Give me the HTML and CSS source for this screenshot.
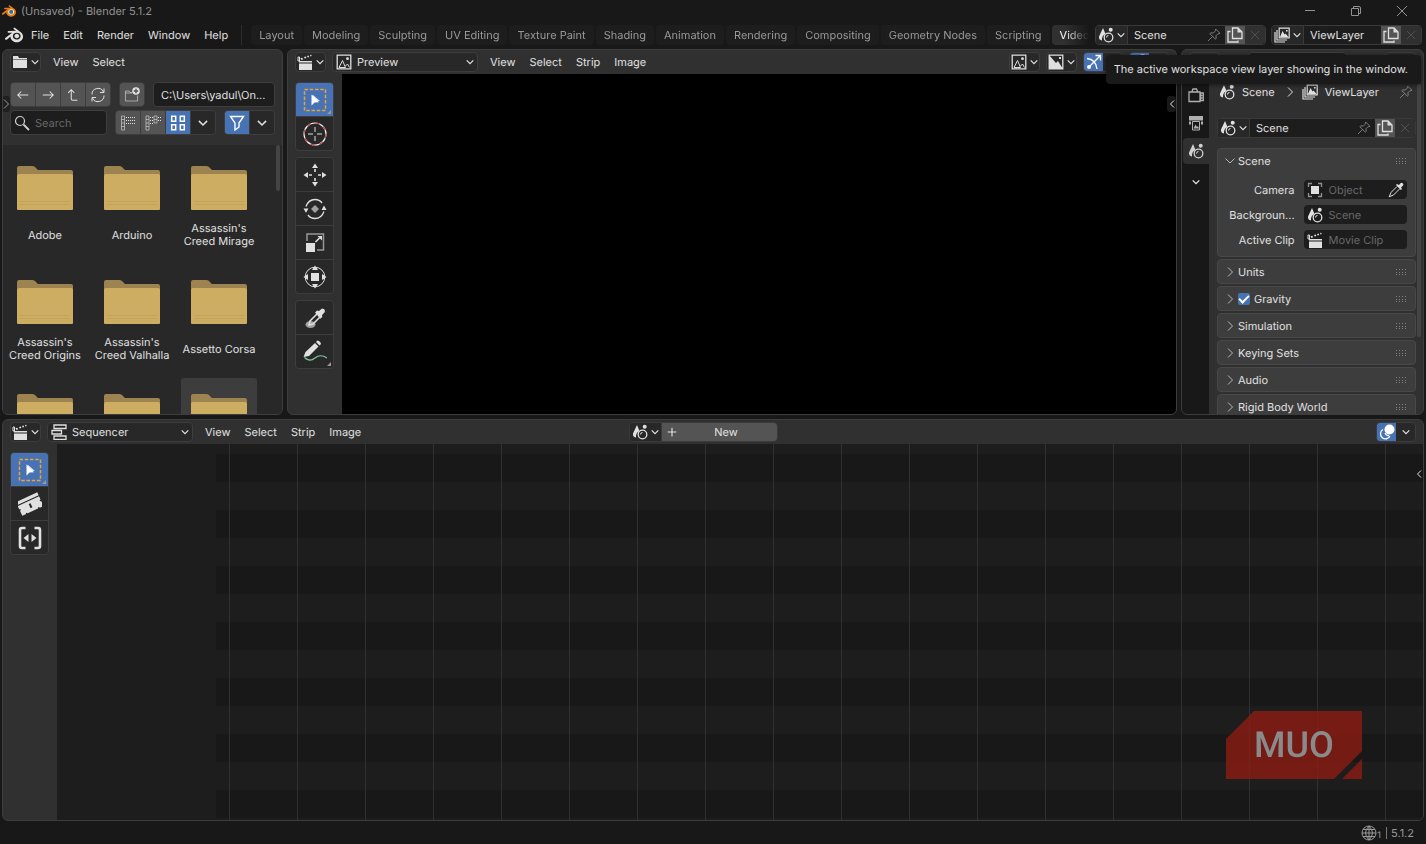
FILE: index.html
```html
<!DOCTYPE html>
<html lang="en">
<head>
<meta charset="utf-8">
<title>(Unsaved) - Blender 5.1.2</title>
<link rel="stylesheet" href="styles.css">
</head>
<body>
<svg class="defs" aria-hidden="true">
  <symbol id="blender" viewBox="0 0 24 24"><path d="M12.51 13.214c.046-.8.438-1.506 1.03-2.006a3.424 3.424 0 0 1 2.212-.79c.85 0 1.631.3 2.211.79.592.5.983 1.206 1.028 2.005.045.823-.285 1.586-.865 2.153a3.389 3.389 0 0 1-2.374.938 3.393 3.393 0 0 1-2.376-.938c-.58-.567-.91-1.33-.865-2.152M7.35 14.831c.006.314.106.922.256 1.398a7.372 7.372 0 0 0 1.593 2.757 8.227 8.227 0 0 0 2.787 2.001 8.947 8.947 0 0 0 3.66.76 8.964 8.964 0 0 0 3.657-.772 8.285 8.285 0 0 0 2.785-2.01 7.428 7.428 0 0 0 1.592-2.762 6.964 6.964 0 0 0 .25-3.074 7.123 7.123 0 0 0-1.016-2.779 7.764 7.764 0 0 0-1.852-2.043h.002L13.566 2.55l-.02-.015c-.492-.378-1.319-.376-1.86.002-.547.382-.609 1.015-.123 1.415l-.001.001 3.126 2.543-9.53.01h-.013c-.788.001-1.545.518-1.695 1.172-.154.665.38 1.217 1.2 1.22V8.9l4.83-.01-8.62 6.617-.034.025c-.813.622-1.075 1.658-.563 2.313.52.667 1.625.668 2.447.004L7.414 14s-.069.52-.063.831zm12.09 1.741c-.97.988-2.326 1.548-3.795 1.55-1.47.004-2.827-.552-3.797-1.538a4.51 4.51 0 0 1-1.036-1.622 4.282 4.282 0 0 1 .282-3.519 4.702 4.702 0 0 1 1.153-1.371c.942-.768 2.141-1.183 3.396-1.185 1.256-.002 2.455.41 3.398 1.175.48.391.87.854 1.152 1.367a4.28 4.28 0 0 1 .522 1.706 4.236 4.236 0 0 1-.239 1.811 4.54 4.54 0 0 1-1.035 1.626"/></symbol>
  <symbol id="chev" viewBox="0 0 8 8"><path class="ln" stroke-width="1.200" d="M.700 2.300l3.300 3.300 3.300-3.300"/></symbol>
  <symbol id="chev-r" viewBox="0 0 8 12"><path class="ln" d="M2 1.500l4.500 4.500-4.500 4.500"/></symbol>
  <symbol id="chev-l" viewBox="0 0 8 12"><path class="ln" d="M6 2.500l-3.500 3.500 3.500 3.500"/></symbol>
  <symbol id="chev-d" viewBox="0 0 12 8"><path class="ln" d="M1.500 1.500l4.500 4.500 4.500-4.500"/></symbol>
  <symbol id="folder-w" viewBox="0 0 16 16"><path d="M1 2h5l1 2h8v1H1zM1 5.600h14V14H1z"/></symbol>
  <symbol id="arrow-l" viewBox="0 0 16 16"><path class="ln" stroke-width="1.200" d="M14 8H2M6 4L2 8l4 4"/></symbol>
  <symbol id="arrow-r" viewBox="0 0 16 16"><path class="ln" stroke-width="1.200" d="M2 8h12M10 4l4 4-4 4"/></symbol>
  <symbol id="arrow-up" viewBox="0 0 16 16"><path class="ln" stroke-width="1.200" d="M6 2v10q0 2 2 2h5M2.500 5.500L6 2l3.500 3.500"/></symbol>
  <symbol id="refresh" viewBox="0 0 16 16"><path class="ln" d="M2 7.500A6 6 0 0 1 13.500 5M14 1.500V5.500h-4M14 8.500A6 6 0 0 1 2.500 11M2 14.500v-4h4"/></symbol>
  <symbol id="newfolder" viewBox="0 0 16 16"><path class="ln dim" d="M8 5.500H6L5 4H1.500v10h12V8.500M1.500 6H8"/><circle cx="12" cy="4" r="3.800"/><path d="M12 1.800v4.400M9.800 4h4.400" stroke="#545454" stroke-width="1.400"/></symbol>
  <symbol id="search" viewBox="0 0 16 16"><circle class="ln" stroke-width="1.200" cx="6" cy="6" r="4.500"/><path class="ln" d="M9.500 9.500L15 15" stroke-width="1.800"/></symbol>
  <symbol id="list1" viewBox="0 0 16 16"><path class="ln dim" d="M1.500 1h3v14h-3zM1.500 4.500h3M1.500 8h3M1.500 11.500h3"/><path class="ln" stroke-dasharray="1 1" d="M6 2.500H16M6 5.500H16M6 8.500H16"/></symbol>
  <symbol id="list2" viewBox="0 0 16 16"><path class="ln dim" d="M1 1h3v14H1zM1 4.500h3M1 8h3M1 11.500h3M9 1h3v7H9zM9 4.500h3"/><path class="ln" stroke-dasharray="1 1" d="M5 2.500H8M5 5.500H8M13 2.500H16M13 5.500H16M5 8.500H8"/></symbol>
  <symbol id="thumbs" viewBox="0 0 16 16"><path class="ln" stroke-width="1.500" d="M1.700 1.200h4v5h-4zM10.300 1.200h4v5h-4zM1.700 9.700h4v5h-4zM10.300 9.700h4v5h-4z"/></symbol>
  <symbol id="funnel" viewBox="0 0 16 16"><path class="ln" stroke-width="1.400" d="M1.500 1.500h13L10 8v4l-4 3V8z"/></symbol>
  <symbol id="clap" viewBox="0 0 16 16"><path d="M2 9.500h13V16H2zM2 7h13v1.600H2z"/><path class="ln" d="M1 3h1.500v4H1z"/><path d="M3.500 4.300l1.700-.6 1 1.600-1.700.6zM7 3l1.700-.6.700 1.500-1.700.6zM10 2l1.500-.4.700 1.400-1.500.5zM13 1l1.200-.2.500 1.300-1.200.3z"/></symbol>
  <symbol id="image" viewBox="0 0 16 16"><path class="ln" stroke-width="1.300" d="M1.200 1.200h13.600v13.600H1.200z"/><path class="ln" d="M3 13.500l3.500-7 3 7zM9.500 12l2-2 2 3.500"/><circle cx="11.500" cy="4.700" r="1.400"/></symbol>
  <symbol id="alpha" viewBox="0 0 16 16"><path class="ln" stroke-width="1.300" d="M1.200 1.200h13.600v13.600H1.200z"/><path d="M1 1l7 8 2-2 5 8H1zM11 3h2v2h-2z"/></symbol>
  <symbol id="gizmo" viewBox="0 0 16 16"><path class="ln" stroke-width="1.300" d="M1 4.500Q10 5.500 11 15M3 13L14 2M9.500 1.500h5v5"/><circle cx="3" cy="13" r="2"/></symbol>
  <symbol id="overlay" viewBox="0 0 16 16"><circle cx="10.500" cy="5.500" r="5"/><path class="ln" stroke-width="1.300" d="M4 5.500A5 5 0 1 0 11 12M6 9q1 2.500 4 2.700"/></symbol>
  <symbol id="scene" viewBox="0 0 16 16"><path d="M5 1L1 9.500Q.500 13 4 13.500 3.500 8.500 7.500 7z"/><circle cx="12.700" cy="2.800" r="2"/><circle class="ln" stroke-width="1.300" cx="10.500" cy="10.500" r="4.300"/><path class="ln" d="M8.500 10.500a2 2 0 0 1 2-2"/></symbol>
  <symbol id="layers" viewBox="0 0 16 16"><path class="ln" stroke-width="1.200" d="M5.200 1.200h10v9.600h-10zM3 3v10h10M1 5v10h10"/><path d="M6 10l2.500-6 2 3.500 1-1 3 3.500zM12 3h1.600v1.600H12z"/></symbol>
  <symbol id="dup" viewBox="0 0 16 16"><path class="ln" stroke-width="1.300" d="M5.500 1h5.500l4 4v6.500H5.500zM3.500 4.500H1V15h10v-1.500"/><path d="M10.500 1l4.500 4.500h-4.500z"/></symbol>
  <symbol id="pin" viewBox="0 0 16 16"><path class="ln" d="M10 1.200l4.800 4.800-1.300.7-.8-.3-2.500 2.500.3 3-1 .8L3.300 6.500l.9-1 3 .3 2.500-2.500-.3-.9zM6.300 9.700L1.200 14.800"/></symbol>
  <symbol id="x" viewBox="0 0 16 16"><path class="ln" d="M3.500 3.500l9 9M12.500 3.500l-9 9"/></symbol>
  <symbol id="plus" viewBox="0 0 16 16"><path class="ln" stroke-width="1.300" d="M8 3v10M3 8h10"/></symbol>
  <symbol id="seq" viewBox="0 0 16 16"><path class="ln" stroke-width="1.300" d="M3 1h12v3.500H3zM1 6.500h9.500V10H1zM3 12h12v3.300H3z"/></symbol>
  <symbol id="tool" viewBox="0 0 16 16"><path class="ln" stroke-width="1.300" d="M1 5h11v9.500H1zM12.500 6h2.800v7.500h-2.800zM4 4.500L5 2h3.500l1 2.500M12.500 8.500h2M12.500 11h2"/></symbol>
  <symbol id="printer" viewBox="0 0 16 16"><path d="M1 1h14v4.500H1zM1 6.500h2v3H1zM13 6.500h2v3h-2z"/><path class="ln" d="M4.500 6.500h7v8.500h-7z"/><path d="M5.500 13.500l2-4 1.500 2.500 1-1 1 2.500z"/></symbol>
  <symbol id="object" viewBox="0 0 16 16"><path d="M4 4h8v8H4z"/><path class="ln dim" stroke-width="1.300" d="M1.500 5V1.500H5M11 1.500h3.500V5M14.500 11v3.500H11M5 14.500H1.500V11"/></symbol>
  <symbol id="dropper" viewBox="0 0 16 16"><path class="ln" d="M9 4.500L3 10.500 1.200 14.800 5.500 13l6-6"/><path d="M8 3l1-1 2 1 2-2.200q2.800.3 2.300 2.500L13 5.500l1 1.500-1.200 1z"/></symbol>
  <symbol id="grip" viewBox="0 0 12 8"><path d="M1 1h1v1H1zM4 1h1v1H4zM7 1h1v1H7zM10 1h1v1h-1zM1 4h1v1H1zM4 4h1v1H4zM7 4h1v1H7zM10 4h1v1h-1zM1 6h1v1H1zM4 6h1v1H4zM7 6h1v1H7zM10 6h1v1h-1z"/></symbol>
  <symbol id="globe" viewBox="0 0 16 16"><circle class="ln" cx="8" cy="8" r="7"/><path class="ln" d="M8 1v14M1 8h14M2 4.500h12M2 11.500h12M8 1Q1 8 8 15M8 1q7 7 0 14"/></symbol>
  <symbol id="t-select" viewBox="0 0 24 24"><path d="M1.500 1.500h21v21h-21z" fill="none" stroke="#e8a33d" stroke-width="1.500" stroke-dasharray="3.500 1.750"/><path d="M8.500 6.500v11l3-3 4.500-.3z"/><path d="M9.500 6.500l7.500 6.500h-4.500l-3 3z" opacity=".8"/></symbol>
  <symbol id="t-cursor" viewBox="0 0 24 24"><circle cx="12" cy="12" r="11" fill="none" stroke="#eee" stroke-width="1.200"/><circle cx="12" cy="12" r="11" fill="none" stroke="#b84a4a" stroke-width="1.200" stroke-dasharray="4.320 4.320"/><path class="ln" d="M12 5v5M12 14v5M5 12h5M14 12h5"/></symbol>
  <symbol id="t-move" viewBox="0 0 24 24"><path d="M12 .5l3 4.500H9zM12 23.500l3-4.500H9zM.5 12L5 9v6zM23.500 12L19 9v6z"/><path class="ln" stroke-width="1.600" d="M12 6v3M12 15v3M6 12h3M15 12h3"/></symbol>
  <symbol id="t-rotate" viewBox="0 0 24 24"><path class="ln" stroke-width="1.300" d="M3 9.500Q5.500 2.500 12 2.500q4.500 0 7 3.500M21 14.500q-2.500 7-9 7-4.500 0-7-3.500"/><path d="M.5 11.500h5L3 15.800zM18.500 13h5L21 8.500z"/><path class="fade" d="M12 8l4 4-4 4-4-4z"/></symbol>
  <symbol id="t-scale" viewBox="0 0 24 24"><path class="ln dim" stroke-width="1.500" d="M4 10V3h16.500v16H14"/><path d="M3 12h9v9H3zM19 5v4.500L14.500 5z"/><path class="ln" stroke-width="1.600" d="M12.500 11l4-4"/></symbol>
  <symbol id="t-transform" viewBox="0 0 24 24"><circle class="ln" cx="12" cy="12" r="9.800"/><path d="M8 8h8v8H8z"/><path d="M12 .5l3 4.500H9zM12 23.500l3-4.500H9zM.5 12L5 9v6zM23.500 12L19 9v6z"/></symbol>
  <symbol id="t-dropper" viewBox="0 0 24 24"><ellipse class="fade" cx="7.500" cy="18.500" rx="5" ry="3.500"/><path class="ln" stroke-width="1.500" d="M14 8L7 15l-1 4 4-1 7-7"/><path d="M12 6.500l2-2 2 .5 3-2.500q4 .5 2.500 4L19 9l.3 2-2 1.700z"/></symbol>
  <symbol id="t-pen" viewBox="0 0 24 24"><path d="M.5 17l2-5L12 3l3.500 3.500-9.500 9.500zM13 2l1.500-1.500q3 .5 3.500 3.500L16.500 5.500z"/><path fill="none" stroke="#7ccca0" stroke-width="1.200" d="M1.500 17.500q5 5 10.500.5t12 0"/></symbol>
  <symbol id="t-blade" viewBox="0 0 24 24"><g transform="rotate(-25 12 12)"><path d="M0 4.500h23.500v3.200H0zM0 8.700h23.500v3.500l-1.500.8 1.500 1.500v5h-4l-1-1.300-1.200 1.300H6l-1.200-1.300-1 1.300H0v-5l1.500-1.500L0 12.200z"/><path fill="#282828" d="M10.800 11.500h2v4.500h-2z"/></g></symbol>
  <symbol id="t-slip" viewBox="0 0 24 24"><path class="ln" stroke-width="2.600" d="M7.500 2H4Q2 2 2 4v16q0 2 2 2h3.500M16.500 2H20q2 0 2 2v16q0 2-2 2h-3.500"/><path d="M10.500 8v8l-5-4zM13.500 8v8l5-4z"/></symbol>
  <symbol id="folder" viewBox="0 0 56 44"><path fill="#9c8350" d="M0 43V2q0-2 2-2h13q2 0 3 1l3 3h33q2 0 2 2v37z"/><path fill="#ccad62" d="M0 10q0-2 2-2h52q2 0 2 2v33q0 1-1 1H1q-1 0-1-1z"/><path stroke="#c1a35c" d="M3 35.500h50M3 38.500h50"/></symbol>
</svg>

<div class="app">
  <header class="titlebar">
    <svg class="i14 orange" viewBox="0 0 24 24"><circle cx="15.700" cy="13.500" r="5.500" fill="#eee"/><use href="#blender"/><circle cx="15.700" cy="13.500" r="3.300" fill="#2a6cb0"/></svg>
    <span class="apptitle">(Unsaved) - Blender 5.1.2</span>
    <div class="winctl">
      <button aria-label="Minimize"><svg class="i12" viewBox="0 0 12 12"><path class="ln" d="M1 5.500h10"/></svg></button>
      <button aria-label="Restore"><svg class="i12" viewBox="0 0 12 12"><path class="ln" d="M1.500 3.500h7v7h-7zM3.500 3.500v-2H9q1.500 0 1.500 1.500v5.500h-2"/></svg></button>
      <button aria-label="Close"><svg class="i12" viewBox="0 0 12 12"><path class="ln" d="M1 1l10 10M11 1L1 11"/></svg></button>
    </div>
  </header>

  <div class="topbar">
    <button class="logo" aria-label="Blender"><svg class="i18"><use href="#blender"/></svg></button>
    <nav class="menus">
      <button>File</button><button>Edit</button><button>Render</button><button>Window</button><button>Help</button>
    </nav>
    <nav class="tabs">
      <button>Layout</button><button>Modeling</button><button>Sculpting</button><button>UV Editing</button><button>Texture Paint</button><button>Shading</button><button>Animation</button><button>Rendering</button><button>Compositing</button><button>Geometry Nodes</button><button>Scripting</button><button class="on">Video</button>
    </nav>
    <div class="idbox id-scene">
      <button class="pick" aria-label="Browse scene"><svg class="i16"><use href="#scene"/></svg><svg class="i8"><use href="#chev"/></svg></button>
      <input value="Scene" aria-label="Scene name">
      <svg class="i14 pin"><use href="#pin"/></svg>
      <button class="dup" aria-label="New scene"><svg class="i16"><use href="#dup"/></svg></button>
      <button class="del" aria-label="Delete scene"><svg class="i14"><use href="#x"/></svg></button>
    </div>
    <div class="idbox id-layer">
      <button class="pick" aria-label="Browse view layer"><svg class="i16"><use href="#layers"/></svg><svg class="i8"><use href="#chev"/></svg></button>
      <input value="ViewLayer" aria-label="View layer name">
      <button class="dup" aria-label="New view layer"><svg class="i16"><use href="#dup"/></svg></button>
      <button class="del" aria-label="Delete view layer"><svg class="i14"><use href="#x"/></svg></button>
    </div>
  </div>

  <main class="areas">
    <section class="area files">
      <div class="head">
        <button class="pick boxed" aria-label="Editor type"><svg class="i16"><use href="#folder-w"/></svg><svg class="i8"><use href="#chev"/></svg></button>
        <nav class="menus"><button>View</button><button>Select</button></nav>
      </div>
      <div class="filebar">
        <div class="frow">
          <div class="group">
            <button aria-label="Back"><svg class="i14"><use href="#arrow-l"/></svg></button>
            <button aria-label="Forward"><svg class="i14"><use href="#arrow-r"/></svg></button>
            <button aria-label="Parent folder"><svg class="i14"><use href="#arrow-up"/></svg></button>
            <button aria-label="Refresh"><svg class="i16"><use href="#refresh"/></svg></button>
          </div>
          <div class="group"><button aria-label="New folder"><svg class="i16"><use href="#newfolder"/></svg></button></div>
          <input class="path" value="C:\Users\yadul\On..." aria-label="Path">
        </div>
        <div class="frow">
          <label class="search"><svg class="i16"><use href="#search"/></svg><input placeholder="Search" aria-label="Search"></label>
          <div class="group">
            <button aria-label="Vertical list"><svg class="i16"><use href="#list1"/></svg></button>
            <button aria-label="Horizontal list"><svg class="i16"><use href="#list2"/></svg></button>
            <button class="on" aria-label="Thumbnails"><svg class="i16"><use href="#thumbs"/></svg></button>
            <button class="dark" aria-label="Display settings"><svg class="i10"><use href="#chev"/></svg></button>
          </div>
          <div class="group">
            <button class="on" aria-label="Filter"><svg class="i16"><use href="#funnel"/></svg></button>
            <button class="dark" aria-label="Filter settings"><svg class="i10"><use href="#chev"/></svg></button>
          </div>
        </div>
      </div>
      <button class="edge edge-l" aria-label="Show sidebar"><svg><use href="#chev-r"/></svg></button>
      <div class="filelist">
        <div class="file"><svg><use href="#folder"/></svg><span>Adobe</span></div>
        <div class="file"><svg><use href="#folder"/></svg><span>Arduino</span></div>
        <div class="file"><svg><use href="#folder"/></svg><span>Assassin's Creed Mirage</span></div>
        <div class="file"><svg><use href="#folder"/></svg><span>Assassin's Creed Origins</span></div>
        <div class="file"><svg><use href="#folder"/></svg><span>Assassin's Creed Valhalla</span></div>
        <div class="file"><svg><use href="#folder"/></svg><span>Assetto Corsa</span></div>
        <div class="file"><svg><use href="#folder"/></svg></div>
        <div class="file"><svg><use href="#folder"/></svg></div>
        <div class="file hover"><svg><use href="#folder"/></svg></div>
        <i class="scroll"></i>
      </div>
    </section>

    <section class="area preview">
      <div class="head">
        <button class="pick boxed" aria-label="Editor type"><svg class="i16"><use href="#clap"/></svg><svg class="i8"><use href="#chev"/></svg></button>
        <label class="drop"><svg class="i16"><use href="#image"/></svg><select aria-label="View type"><option>Preview</option></select><svg class="i8"><use href="#chev"/></svg></label>
        <nav class="menus"><button>View</button><button>Select</button><button>Strip</button><button>Image</button></nav>
        <div class="right">
          <button class="pick boxed" aria-label="Display mode"><svg class="i16"><use href="#image"/></svg><svg class="i8"><use href="#chev"/></svg></button>
          <button class="pick boxed" aria-label="Channels"><svg class="i16"><use href="#alpha"/></svg><svg class="i8"><use href="#chev"/></svg></button>
          <div class="toggle"><button class="on" aria-label="Gizmos"><svg class="i16"><use href="#gizmo"/></svg></button><button aria-label="Gizmo settings"><svg class="i8"><use href="#chev"/></svg></button></div>
          <div class="toggle"><button class="on" aria-label="Overlays"><svg class="i16"><use href="#overlay"/></svg></button><button aria-label="Overlay settings"><svg class="i8"><use href="#chev"/></svg></button></div>
        </div>
      </div>
      <div class="work">
        <aside class="tools">
          <div class="tgroup">
            <button class="on more" aria-label="Select box"><svg><use href="#t-select"/></svg></button>
            <button aria-label="Cursor"><svg><use href="#t-cursor"/></svg></button>
          </div>
          <div class="tgroup">
            <button aria-label="Move"><svg><use href="#t-move"/></svg></button>
            <button aria-label="Rotate"><svg><use href="#t-rotate"/></svg></button>
            <button aria-label="Scale"><svg><use href="#t-scale"/></svg></button>
            <button aria-label="Transform"><svg><use href="#t-transform"/></svg></button>
          </div>
          <div class="tgroup">
            <button aria-label="Sample"><svg><use href="#t-dropper"/></svg></button>
            <button class="more" aria-label="Annotate"><svg><use href="#t-pen"/></svg></button>
          </div>
        </aside>
        <div class="screen"><button class="edge edge-r" aria-label="Show sidebar"><svg><use href="#chev-l"/></svg></button></div>
      </div>
    </section>

    <section class="area props">
      <div class="head">
        <button class="pick boxed" aria-label="Editor type"></button>
        <input class="psearch" aria-label="Search properties">
        <button class="pick boxed" aria-label="Options"></button>
      </div>
      <div class="pbody">
        <nav class="ptabs">
          <button aria-label="Render"><svg class="i16"><use href="#tool"/></svg></button>
          <button aria-label="Output"><svg class="i16"><use href="#printer"/></svg></button>
          <button class="on" aria-label="Scene"><svg class="i16"><use href="#scene"/></svg></button>
          <button aria-label="More tabs"><svg class="i8"><use href="#chev"/></svg></button>
        </nav>
        <div class="pcontent">
          <div class="crumbs">
            <svg class="i16"><use href="#scene"/></svg><span>Scene</span>
            <svg class="sep"><use href="#chev-r"/></svg>
            <svg class="i16"><use href="#layers"/></svg><span>ViewLayer</span>
            <svg class="i14 pin"><use href="#pin"/></svg>
          </div>
          <div class="idbox">
            <button class="pick" aria-label="Browse scene"><svg class="i16"><use href="#scene"/></svg><svg class="i8"><use href="#chev"/></svg></button>
            <input value="Scene" aria-label="Scene data name">
            <svg class="i14 pin"><use href="#pin"/></svg>
            <button class="dup" aria-label="New scene"><svg class="i16"><use href="#dup"/></svg></button>
            <button class="del" aria-label="Delete scene"><svg class="i14"><use href="#x"/></svg></button>
          </div>
          <div class="panels">
            <div class="panel open">
              <h3><svg class="pd"><use href="#chev-d"/></svg>Scene<svg class="grip"><use href="#grip"/></svg></h3>
              <div class="field"><label for="cam">Camera</label><div class="slot"><svg class="i16"><use href="#object"/></svg><input id="cam" placeholder="Object"><svg class="i16"><use href="#dropper"/></svg></div></div>
              <div class="field"><label for="bg">Backgroun...</label><div class="slot"><svg class="i16"><use href="#scene"/></svg><input id="bg" placeholder="Scene"></div></div>
              <div class="field"><label for="clip">Active Clip</label><div class="slot"><svg class="i16"><use href="#clap"/></svg><input id="clip" placeholder="Movie Clip"></div></div>
            </div>
            <div class="panel"><h3><svg class="pr"><use href="#chev-r"/></svg>Units<svg class="grip"><use href="#grip"/></svg></h3></div>
            <div class="panel"><h3><svg class="pr"><use href="#chev-r"/></svg><label class="check"><input type="checkbox" checked>Gravity</label><svg class="grip"><use href="#grip"/></svg></h3></div>
            <div class="panel"><h3><svg class="pr"><use href="#chev-r"/></svg>Simulation<svg class="grip"><use href="#grip"/></svg></h3></div>
            <div class="panel"><h3><svg class="pr"><use href="#chev-r"/></svg>Keying Sets<svg class="grip"><use href="#grip"/></svg></h3></div>
            <div class="panel"><h3><svg class="pr"><use href="#chev-r"/></svg>Audio<svg class="grip"><use href="#grip"/></svg></h3></div>
            <div class="panel"><h3><svg class="pr"><use href="#chev-r"/></svg>Rigid Body World<svg class="grip"><use href="#grip"/></svg></h3></div>
          </div>
        </div>
        <i class="scroll"></i>
      </div>
    </section>
  </main>

  <section class="area sequencer">
    <div class="head">
      <div class="left">
        <button class="pick boxed" aria-label="Editor type"><svg class="i16"><use href="#clap"/></svg><svg class="i8"><use href="#chev"/></svg></button>
        <label class="drop"><svg class="i16"><use href="#seq"/></svg><select aria-label="View type"><option>Sequencer</option></select><svg class="i8"><use href="#chev"/></svg></label>
        <nav class="menus"><button>View</button><button>Select</button><button>Strip</button><button>Image</button></nav>
      </div>
      <div class="idbox newbox">
        <button class="pick" aria-label="Browse scene"><svg class="i16"><use href="#scene"/></svg><svg class="i8"><use href="#chev"/></svg></button>
        <button class="new"><svg class="i14"><use href="#plus"/></svg><span>New</span></button>
      </div>
      <div class="right">
        <div class="toggle"><button class="on" aria-label="Overlays"><svg class="i16"><use href="#overlay"/></svg></button><button aria-label="Overlay settings"><svg class="i8"><use href="#chev"/></svg></button></div>
      </div>
    </div>
    <div class="work">
      <aside class="tools">
        <div class="tgroup">
          <button class="on more" aria-label="Select box"><svg><use href="#t-select"/></svg></button>
          <button aria-label="Blade"><svg><use href="#t-blade"/></svg></button>
          <button aria-label="Slip"><svg><use href="#t-slip"/></svg></button>
        </div>
      </aside>
      <div class="timeline"><div class="tracks"></div><div class="frames"></div><button class="edge edge-r" aria-label="Show sidebar"><svg><use href="#chev-l"/></svg></button></div>
    </div>
    <div class="mark">
      <svg viewBox="0 0 136 68"><path fill="#8f1c14" d="M28 0h108v40l-28 28H0V28zM136 48v20h-20z"/></svg>
      <span>MUO</span>
    </div>
  </section>

  <footer class="status"><svg class="i16"><use href="#globe"/></svg><sub>1</sub><span class="bar"></span><span>5.1.2</span></footer>
  <div class="tooltip" role="tooltip">The active workspace view layer showing in the window.</div>
</div>
</body>
</html>
```
FILE: styles.css
```css
* { box-sizing: border-box; }
body {
  margin: 0;
  background: #181818;
  color: #e0e0e0;
  font: 11px/14px Inter, "Noto Sans", sans-serif;
  text-rendering: geometricPrecision;
}
button, input, select {
  font: inherit;
  color: inherit;
  text-rendering: inherit;
  background: none;
  border: 0;
  padding: 0;
  margin: 0;
  min-width: 0;
  outline: 0;
}
input::placeholder { color: #686868; opacity: 1; }
select { appearance: none; }
svg { fill: currentColor; flex: none; display: block; }
.defs { position: absolute; width: 0; height: 0; }
.ln { fill: none; stroke: currentColor; }
.dim { opacity: .6; }
.fade { opacity: .65; }
.i8 { width: 8px; height: 8px; }
.i10 { width: 10px; height: 10px; }
.i12 { width: 12px; height: 12px; }
.i14 { width: 14px; height: 14px; }
.i16 { width: 16px; height: 16px; }
.i18 { width: 18px; height: 18px; }

.app {
  position: relative;
  height: 100vh;
  display: grid;
  grid-template-columns: minmax(0, 1fr);
  grid-template-rows: 22px 27px minmax(0, 366fr) minmax(0, 406fr) 19px;
  padding-bottom: 4px;
  overflow: hidden;
}
.titlebar { display: flex; align-items: center; gap: 5px; padding: 0 18px 0 2px; color: #929292; }
.orange { color: #e87d0d; }
.winctl { margin-left: auto; display: flex; gap: 34px; }

.topbar { display: flex; align-items: center; padding: 0 4px 1px 5px; }
.logo { margin-right: 8px; }
.menus { display: flex; gap: 14px; }
.topbar .menus { padding-right: 13px; border-right: 1px solid #2c2c2c; line-height: 20px; }
.tabs {
  flex: 1 1 0;
  display: flex;
  gap: 2px;
  overflow: hidden;
  margin: 0 6px 0 9px;
  color: #989898;
  mask-image: linear-gradient(to right, #000 calc(100% - 24px), transparent);
}
.tabs button { flex: none; padding: 0 8px; line-height: 20px; border-radius: 4px; background: #1d1d1d; white-space: nowrap; }
.tabs .on { background: #303030; color: #fff; }

.idbox {
  display: flex;
  align-items: center;
  height: 20px;
  border: 1px solid #3a3a3a;
  border-radius: 4px;
  background: #1d1d1d;
  overflow: hidden;
}
.id-scene { width: 171px; margin-right: 5px; }
.id-layer { width: 151px; }
.idbox input { flex: 1; padding-left: 6px; }
.idbox .pick { height: 100%; padding: 0 2px; background: #282828; border-right: 1px solid #3a3a3a; }
.pick { display: flex; align-items: center; gap: 3px; flex: none; }
.pin { color: #8a8a8a; margin: 0 4px; }
.dup, .del { height: 100%; width: 20px; display: grid; place-items: center; background: #545454; flex: none; }
.del { background: #303030; color: #555; }

.boxed { height: 20px; min-width: 31px; padding: 0 1px; justify-content: center; background: #282828; border: 1px solid #3d3d3d; border-radius: 4px; }

.areas { display: grid; grid-template-columns: 281px minmax(0, 1fr) 243px; gap: 4px; padding: 0 2px; min-height: 0; }
.area {
  position: relative;
  display: flex;
  flex-direction: column;
  min-height: 0;
  background: #303030;
  border: 1px solid #3d3d3d;
  border-radius: 6px;
  overflow: hidden;
}
.head { flex: none; display: flex; align-items: center; height: 24px; padding: 0 7px 1px; }
.head .menus { margin-left: 12px; }
.drop { display: flex; align-items: center; width: 146px; height: 20px; margin-left: 6px; padding: 0 3px; gap: 5px; background: #282828; border: 1px solid #3d3d3d; border-radius: 4px; }
.drop select { flex: 1; }
.right { margin-left: auto; display: flex; gap: 6px; }
.toggle { display: flex; height: 20px; border: 1px solid #3d3d3d; border-radius: 4px; overflow: hidden; background: #282828; }
.toggle button { width: 19px; display: grid; place-items: center; }
.on { background: #4772b3; color: #fff; }
.work { flex: 1; display: flex; min-height: 0; }

.filebar { flex: none; display: grid; grid-template-columns: minmax(0, 1fr); gap: 3px; padding: 8px 7px 10px; }
.frow { display: flex; gap: 8px; }
.group { flex: none; display: flex; height: 25px; border: 1px solid #3d3d3d; border-radius: 4px; overflow: hidden; gap: 1px; background: #3d3d3d; }
.group button { width: 24px; display: grid; place-items: center; background: #545454; }
.group .on { background: #4772b3; }
.group .dark { background: #282828; }
.path, .search { flex: 1; height: 25px; border: 1px solid #3d3d3d; border-radius: 4px; background: #1d1d1d; }
.path { padding: 0 7px; }
.search { display: flex; align-items: center; gap: 5px; padding: 0 3px; color: #d0d0d0; }
.search input { flex: 1; width: 0; }
.filelist {
  position: relative;
  flex: 1;
  min-height: 0;
  display: grid;
  grid-template-columns: repeat(3, 76px);
  grid-auto-rows: 102px;
  gap: 12px 11px;
  padding: 5px 4px;
  background: #282828;
  overflow: hidden;
}
.file { display: flex; flex-direction: column; align-items: center; padding-top: 16px; text-align: center; border-radius: 3px; }
.file svg { width: 56px; height: 44px; }
.file span { flex: none; height: 50px; display: flex; align-items: center; line-height: 13px; }
.hover { background: #3d3d3d; }
.scroll { position: absolute; right: 2px; top: 0; width: 4px; height: 46px; border-radius: 2px; background: #444; }
.edge { position: absolute; width: 9px; height: 16px; background: #202020; display: grid; place-items: center; border-radius: 3px; }
.edge svg { width: 8px; height: 12px; }
.edge-l { left: -2px; top: 46px; color: #999; }
.edge-r { right: 0; top: 22px; background: #181818; }

.tools { flex: none; width: 54px; padding: 8px 7px; display: flex; flex-direction: column; gap: 6px; }
.tgroup { width: 39px; border: 1px solid #3d3d3d; border-radius: 4px; overflow: hidden; display: grid; gap: 1px; background: #3d3d3d; }
.tgroup button { position: relative; height: 33px; display: grid; place-items: center; background: #282828; }
.tgroup .on { background: #4772b3; }
.tgroup svg { width: 24px; height: 24px; }
.more::after { content: ""; position: absolute; right: 2px; bottom: 2px; border: 2px solid; border-color: transparent #999 #999 transparent; }
.screen { position: relative; flex: 1; background: #000; }

.psearch { flex: 1; height: 20px; margin: 0 38px 0 28px; background: #1d1d1d; border: 1px solid #3d3d3d; border-radius: 4px; }
.pbody { position: relative; flex: 1; display: flex; min-height: 0; }
.pbody .scroll { top: 10px; right: 2px; height: 253px; }
.ptabs { flex: none; width: 27px; padding: 8px 0 0 1px; background: #181818; display: flex; flex-direction: column; gap: 2px; color: #b0b0b0; }
.ptabs button { height: 26px; display: grid; place-items: center; border-radius: 4px 0 0 4px; }
.ptabs .on { background: #303030; color: #d0d0d0; }
.ptabs button:last-child { margin-top: 3px; color: #eee; }
.pcontent { flex: 1; min-width: 0; padding: 10px 7px 0 8px; }
.crumbs { display: flex; align-items: center; height: 16px; gap: 7px; padding-left: 2px; }
.crumbs .sep { width: 8px; height: 12px; margin: 0 1px 0 4px; }
.crumbs .pin { margin: 0 3px 0 auto; }
.pcontent .idbox { margin: 18px 0 10px; }
.panels { display: grid; gap: 2px; }
.panel { background: #3d3d3d; border: 1px solid #484848; border-radius: 4px; }
.panel h3 { display: flex; align-items: center; height: 23px; margin: 0; padding: 0 8px 0 6px; font: inherit; }
.pd { width: 12px; height: 8px; margin-right: 2px; }
.pr { width: 8px; height: 12px; margin: 0 4px 0 2px; }
.pd, .pr { color: #b8b8b8; }
.grip { width: 12px; height: 8px; margin-left: auto; color: #808080; }
.open { padding-bottom: 4px; }
.open h3 { margin-bottom: 5px; }
.field { display: grid; grid-template-columns: 77fr 104fr; gap: 9px; align-items: center; padding: 0 8px 0 0; text-align: right; height: 25px; }
.slot { display: flex; align-items: center; height: 19px; gap: 6px; padding: 0 3px; background: #1d1d1d; border-radius: 4px; }
.slot input { flex: 1; width: 0; }
.check { display: flex; align-items: center; gap: 4px; }
.check input { appearance: none; width: 12px; height: 12px; border-radius: 2px; background: #4772b3; display: grid; place-items: center; }
.check input:checked::before { content: ""; width: 8px; height: 4px; border: solid #fff; border-width: 0 0 2px 2px; transform: rotate(-45deg); margin-bottom: 2px; }

.sequencer { margin: 4px 2px 0; }
.sequencer .head { display: grid; grid-template-columns: 1fr auto 1fr; }
.left { display: flex; align-items: center; }
.newbox { width: 149px; margin-right: 20px; }
.new { flex: 1; height: 100%; display: flex; align-items: center; background: #545454; padding: 0 3px; }
.new span { flex: 1; }
.timeline { position: relative; flex: 1; background: #1d1d1d; }
.tracks { position: absolute; inset: 10px 0 0 159px; background: repeating-linear-gradient(#181818 0 28px, #1d1d1d 28px 56px); }
.frames { position: absolute; inset: 0 0 0 172px; background: repeating-linear-gradient(to right, #303030 0 1px, transparent 1px 68px); }
.mark { position: absolute; right: 61px; bottom: 41px; width: 136px; height: 68px; opacity: .78; }
.mark svg { width: 136px; height: 68px; }
.mark span { position: absolute; inset: 0; text-align: center; font: 500 36px/68px Roboto, sans-serif; color: #aaa; }

.status { display: flex; align-items: center; justify-content: flex-end; padding: 4px 12px 0; color: #999; }
.status sub { font-size: 9px; line-height: 9px; align-self: flex-end; }
.bar { width: 1px; height: 12px; background: #777; margin: 0 4px 0 5px; }
.tooltip { position: absolute; top: 55px; right: 5px; padding: 8px 13px 8px 8px; line-height: 13px; background: #1a1a1a; border-radius: 4px; box-shadow: 0 1px 4px #0008; white-space: nowrap; }
```
